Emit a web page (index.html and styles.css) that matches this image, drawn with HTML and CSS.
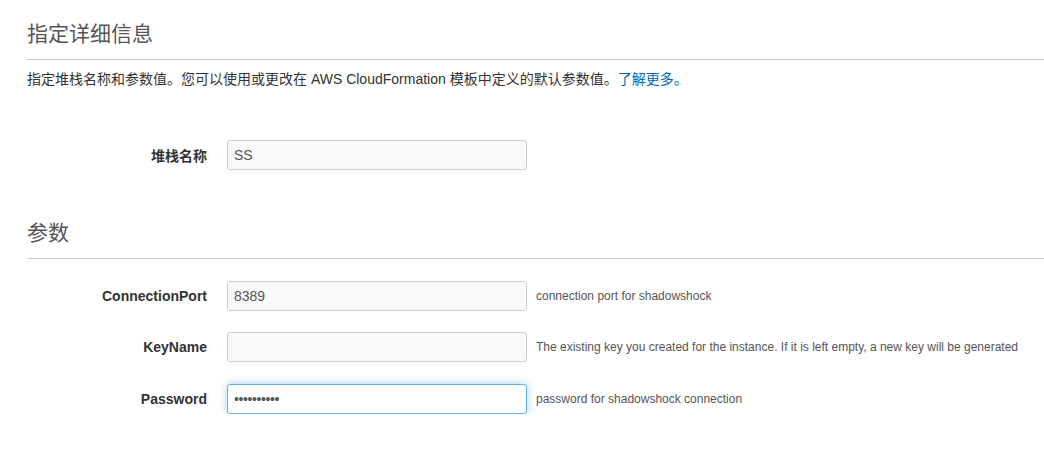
FILE: index.html
```html
<!DOCTYPE html>
<html lang="zh-CN">
<head>
<meta charset="utf-8">
<title>指定详细信息</title>
<link rel="stylesheet" href="styles.css">
</head>
<body>
<div class="page">
  <h2 class="section-title">指定详细信息</h2>
  <p class="desc">指定堆栈名称和参数值。您可以使用或更改在 AWS CloudFormation 模板中定义的默认参数值。<a class="link" href="#">了解更多。</a></p>

  <div class="form-row first-row">
    <label class="label">堆栈名称</label>
    <input class="field" type="text" value="SS" readonly>
  </div>

  <h2 class="section-title params-title">参数</h2>

  <div class="params">
    <div class="form-row">
      <label class="label">ConnectionPort</label>
      <input class="field" type="text" value="8389" readonly>
      <span class="help">connection port for shadowshock</span>
    </div>
    <div class="form-row">
      <label class="label">KeyName</label>
      <input class="field" type="text" value="" readonly>
      <span class="help">The existing key you created for the instance. If it is left empty, a new key will be generated</span>
    </div>
    <div class="form-row last-row">
      <label class="label">Password</label>
      <input class="field focused" type="password" value="xxxxxxxxxx" readonly>
      <span class="help">password for shadowshock connection</span>
    </div>
  </div>
</div>
</body>
</html>
```

FILE: styles.css
```css
html, body {
  margin: 0;
  padding: 0;
  background: #ffffff;
}

body {
  font-family: "Liberation Sans", "Noto Sans CJK SC", sans-serif;
  color: #333333;
  font-size: 14px;
}

.page {
  padding-left: 27px;
  padding-top: 19px;
}

.section-title {
  margin: 0;
  font-size: 21px;
  font-weight: 400;
  line-height: 30px;
  color: #555555;
  padding-bottom: 10px;
  border-bottom: 1px solid #cccccc;
}

.params-title {
  margin-top: 48px;
}

.desc {
  margin: 9px 0 0;
  line-height: 20px;
  font-size: 14px;
  color: #333333;
}

.link {
  color: #0066c0;
  text-decoration: none;
}

.form-row {
  display: flex;
  align-items: center;
  height: 30px;
}

.first-row {
  margin-top: 51px;
}

.params {
  display: flex;
  flex-direction: column;
  gap: 21px;
  margin-top: 22px;
}

.last-row {
  margin-top: 1px;
}

.label {
  width: 180px;
  text-align: right;
  font-weight: 700;
  font-size: 14px;
  color: #333333;
  margin-right: 20px;
  flex: none;
}

.field {
  box-sizing: border-box;
  width: 300px;
  height: 30px;
  margin: 0;
  padding: 0 6px;
  border: 1px solid #cccccc;
  border-radius: 3px;
  background: #f9f9f9;
  font-family: "Liberation Sans", sans-serif;
  font-size: 14px;
  color: #555555;
  outline: none;
  flex: none;
}

.field.focused {
  background: #ffffff;
  border-color: #66afe9;
  box-shadow: 0 0 8px rgba(102, 175, 233, 0.6);
  color: #555555;
  letter-spacing: -0.4px;
}

.help {
  margin-left: 9px;
  font-size: 12px;
  color: #555555;
  white-space: nowrap;
}
```
